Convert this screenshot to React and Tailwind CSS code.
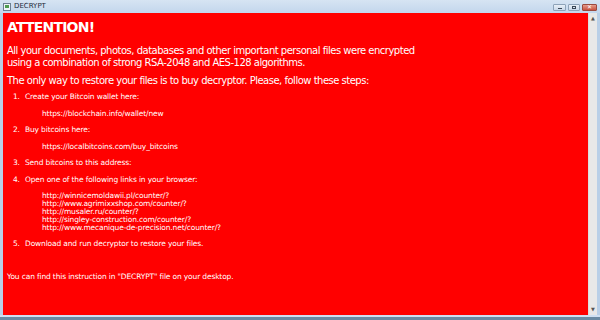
import React from "react";

// each line: text, left indent, top margin before it
const lines = [
  { n: "1.", t: "Create your Bitcoin wallet here:", mt: "mt-0" },
  { t: "https://blockchain.info/wallet/new", mt: "mt-[9px]", url: true },
  { n: "2.", t: "Buy bitcoins here:", mt: "mt-[8px]" },
  { t: "https://localbitcoins.com/buy_bitcoins", mt: "mt-[9px]", url: true },
  { n: "3.", t: "Send bitcoins to this address:", mt: "mt-[8px]" },
  { n: "4.", t: "Open one of the following links in your browser:", mt: "mt-[9px]" },
  { t: "http://winnicemoldawii.pl/counter/?", mt: "mt-[8px]", url: true },
  { t: "http://www.agrimixxshop.com/counter/?", mt: "mt-0", url: true },
  { t: "http://musaler.ru/counter/?", mt: "mt-0", url: true },
  { t: "http://singley-construction.com/counter/?", mt: "mt-0", url: true },
  { t: "http://www.mecanique-de-precision.net/counter/?", mt: "mt-0", url: true },
  { n: "5.", t: "Download and run decryptor to restore your files.", mt: "mt-[8px]" },
];

function TitleBar() {
  return (
    <div className="h-[13px] flex items-center bg-gradient-to-b from-[#d6e4f3] to-[#c3d6ec] pl-[3px] pr-[3px]">
      <div className="w-[8px] h-[8px] border border-[#6c7f92] bg-[#eef3f8] flex items-center justify-center">
        <div className="w-[4px] h-[3px] bg-[#4f9b4f]" />
      </div>
      <span className="ml-[3px] text-[7px] leading-none text-[#1e2b3a]">DECRYPT</span>
      <div className="ml-auto flex items-center gap-[2px] mt-[1px]">
        <div className="w-[13px] h-[7px] rounded-[1px] border border-[#8ea3b9] bg-gradient-to-b from-[#e8eff7] to-[#c9d8e9] flex items-end justify-center pb-[1px]">
          <div className="w-[4px] h-[1px] bg-[#3a4756]" />
        </div>
        <div className="w-[12px] h-[7px] rounded-[1px] border border-[#8ea3b9] bg-gradient-to-b from-[#e8eff7] to-[#c9d8e9] flex items-center justify-center">
          <div className="w-[4px] h-[3px] border border-[#3a4756]" />
        </div>
        <div className="w-[15px] h-[7px] rounded-[1px] border border-[#9b4a3f] bg-gradient-to-b from-[#e69b8c] to-[#c8513f] flex items-center justify-center">
          <span className="text-[6px] leading-none font-bold text-white">✕</span>
        </div>
      </div>
    </div>
  );
}

export default function App() {
  return (
    <div className="w-[600px] h-[320px] flex flex-col bg-[#c3d6ec] overflow-hidden font-['DejaVu_Sans',sans-serif]">
      <TitleBar />
      <div className="flex flex-1 min-h-0">
        <div className="w-[3px] bg-[#b9cfe7]" />
        <div className="w-[585px] bg-[#ff0000] text-white px-[4px] pt-[6px]">
          <h1 className="text-[14px] font-bold leading-[16px] tracking-[-0.8px]">ATTENTION!</h1>
          <p className="mt-[10px] text-[10px] leading-[12px] tracking-[-0.5px]">
            All your documents, photos, databases and other important personal files were encrypted
            <br />
            using a combination of strong RSA-2048 and AES-128 algorithms.
          </p>
          <p className="mt-[6px] text-[10px] leading-[12px] tracking-[-0.5px]">
            The only way to restore your files is to buy decryptor. Please, follow these steps:
          </p>
          <div className="mt-[6px] text-[7.5px] leading-[8px] tracking-[-0.15px] pl-[6px]">
            {lines.map((l) => (
              <div key={l.t} className={"h-[8px] flex whitespace-nowrap " + l.mt}>
                {l.url ? (
                  <span className="pl-[29px]">{l.t}</span>
                ) : (
                  <>
                    <span className="w-[12px]">{l.n}</span>
                    <span>{l.t}</span>
                  </>
                )}
              </div>
            ))}
          </div>
          <p className="mt-[25px] text-[7.5px] leading-[8px] tracking-[-0.15px]">
            You can find this instruction in "DECRYPT" file on your desktop.
          </p>
        </div>
        <div className="w-[9px] bg-[#e8e8e8] border-l border-[#dcdcdc] flex flex-col justify-between items-center py-[3px]">
          <span className="text-[5px] leading-none text-[#555]">▲</span>
          <span className="text-[5px] leading-none text-[#555]">▼</span>
        </div>
        <div className="w-[3px] bg-[#b9cfe7]" />
      </div>
      <div className="h-[2px] bg-[#cfe0f2]" />
      <div className="h-[3px] bg-[#6b8aa3]" />
    </div>
  );
}
